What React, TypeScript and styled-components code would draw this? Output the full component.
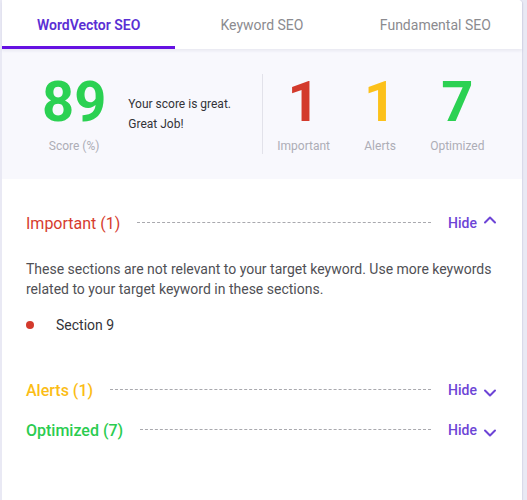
import React from "react";
import styled, { createGlobalStyle } from "styled-components";

const Global = createGlobalStyle`
  html, body { margin: 0; padding: 0; background: #e9e9f4; }
  body { font-family: Roboto, "Liberation Sans", Arial, sans-serif; }
  * { box-sizing: border-box; }
`;

const Card = styled.div`
  margin-left: 2px;
  width: 520px;
  min-height: 500px;
  background: #ffffff;
  border-top-right-radius: 4px;
  box-shadow: 1px 0 1px rgba(80, 80, 140, 0.12);
  display: flex;
  flex-direction: column;
`;

const TabBar = styled.div`
  display: grid;
  grid-template-columns: repeat(3, 1fr);
  height: 49px;
  position: relative;
  z-index: 1;
  box-shadow: 0 2px 3px rgba(60, 60, 110, 0.08);
  background: #fff;
  border-top-right-radius: 4px;
`;

const Tab = styled.div<{ $active?: boolean }>`
  display: flex;
  align-items: center;
  justify-content: center;
  font-size: 14px;
  font-weight: ${(p) => (p.$active ? 600 : 400)};
  color: ${(p) => (p.$active ? "#5a2fd4" : "#8b8b8f")};
  border-bottom: 3px solid ${(p) => (p.$active ? "#6512e2" : "transparent")};
  padding-top: 3px;
`;

const ScorePanel = styled.div`
  background: #f8f8fd;
  display: flex;
  align-items: stretch;
  padding: 25px 0 25px 40px;
`;

const ScoreBlock = styled.div`
  display: flex;
  flex-direction: column;
  align-items: center;
`;

const BigNumber = styled.div<{ $color: string }>`
  font-size: 56px;
  line-height: 56px;
  font-weight: 700;
  color: ${(p) => p.$color};
`;

const Label = styled.div`
  margin-top: 8px;
  font-size: 12px;
  line-height: 16px;
  color: #adadb6;
`;

const Message = styled.div`
  margin-left: 22px;
  width: 134px;
  align-self: center;
  font-size: 12px;
  line-height: 20px;
  color: #333338;
`;

const Stats = styled.div`
  display: flex;
  gap: 34px;
  border-left: 1px solid #e2e2ea;
  padding-left: 14px;
`;

const Body = styled.div`
  padding: 24px 24px 0 24px;
  display: flex;
  flex-direction: column;
`;

const SectionHeader = styled.div`
  height: 40px;
  display: flex;
  align-items: center;
`;

const SectionTitle = styled.div<{ $color: string; $weight: number }>`
  font-size: 16px;
  color: ${(p) => p.$color};
  font-weight: ${(p) => p.$weight};
  white-space: nowrap;
`;

const Dashes = styled.div`
  flex: 1;
  margin: 0 17px;
  height: 0;
  border-top: 1px dashed #a9a9ae;
  transform: translateY(-1px);
`;

const Toggle = styled.div`
  display: flex;
  align-items: center;
  gap: 6px;
  font-size: 14px;
  font-weight: 500;
  color: #6d44d6;
  width: 50px;
`;

const Paragraph = styled.p`
  margin: 16px 0 0 0;
  font-size: 14px;
  line-height: 20px;
  color: #505055;
`;

const BulletRow = styled.div`
  margin: 16px 0 35px 0;
  display: flex;
  align-items: center;
  font-size: 14px;
  line-height: 20px;
  color: #333338;
`;

const Dot = styled.span`
  width: 8px;
  height: 8px;
  border-radius: 50%;
  background: #d33a2c;
  margin: 0 22px 0 0;
`;

const Chevron = ({ up }: { up?: boolean }) => (
  <svg width="14" height="14" viewBox="0 0 14 14" style={{ transform: up ? "translateY(-3px)" : "translateY(3px)" }}>
    <path
      d={up ? "M2 9.5 L7 4.5 L12 9.5" : "M2 4.5 L7 9.5 L12 4.5"}
      fill="none"
      stroke="#6d44d6"
      strokeWidth="2"
      strokeLinecap="round"
      strokeLinejoin="round"
    />
  </svg>
);

const Section = ({ title, color, weight, up }: { title: string; color: string; weight: number; up?: boolean }) => (
  <SectionHeader>
    <SectionTitle $color={color} $weight={weight}>{title}</SectionTitle>
    <Dashes />
    <Toggle>
      Hide <Chevron up={up} />
    </Toggle>
  </SectionHeader>
);

export default function App() {
  return (
    <>
      <Global />
      <Card>
        <TabBar>
          <Tab $active>WordVector SEO</Tab>
          <Tab>Keyword SEO</Tab>
          <Tab>Fundamental SEO</Tab>
        </TabBar>
        <ScorePanel>
          <ScoreBlock>
            <BigNumber $color="#2bd152">89</BigNumber>
            <Label>Score (%)</Label>
          </ScoreBlock>
          <Message>
            Your score is great.
            <br />
            Great Job!
          </Message>
          <Stats>
            <ScoreBlock>
              <BigNumber $color="#d33a2c">1</BigNumber>
              <Label>Important</Label>
            </ScoreBlock>
            <ScoreBlock>
              <BigNumber $color="#fcc11a">1</BigNumber>
              <Label>Alerts</Label>
            </ScoreBlock>
            <ScoreBlock>
              <BigNumber $color="#2bd152">7</BigNumber>
              <Label>Optimized</Label>
            </ScoreBlock>
          </Stats>
        </ScorePanel>
        <Body>
          <Section title="Important (1)" color="#d63c2e" weight={400} up />
          <Paragraph>
            These sections are not relevant to your target keyword. Use more keywords related to your target keyword in these sections.
          </Paragraph>
          <BulletRow>
            <Dot />
            Section 9
          </BulletRow>
          <Section title="Alerts (1)" color="#fbbd16" weight={500} />
          <Section title="Optimized (7)" color="#2bcc50" weight={500} />
        </Body>
      </Card>
    </>
  );
}
